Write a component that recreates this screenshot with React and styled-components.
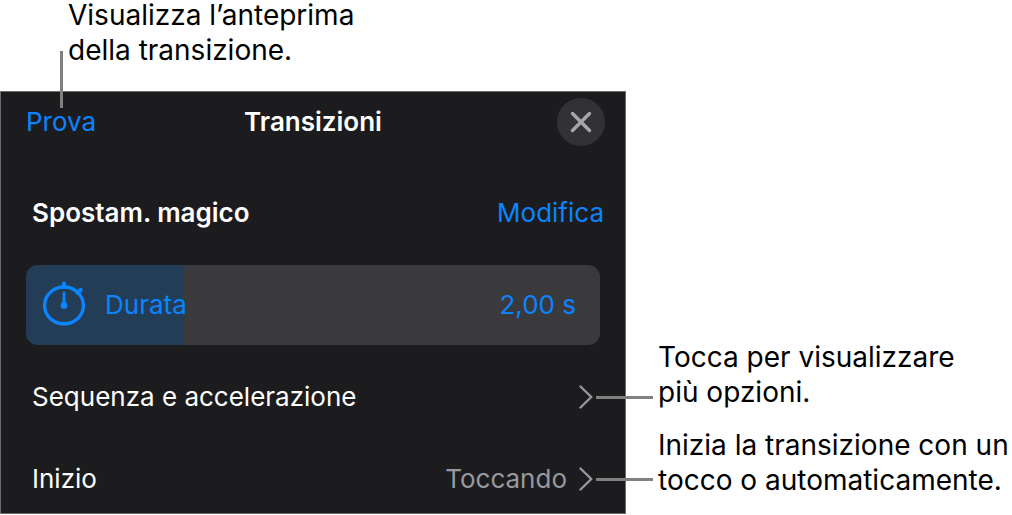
import React, { useState } from "react";
import styled, { createGlobalStyle } from "styled-components";

const MAX_DURATION = 7.3;

const App = () => {
  const [duration, setDuration] = useState(2);

  const fill = (duration / MAX_DURATION) * 100;
  const durationText = `${duration.toFixed(2).replace(".", ",")} s`;

  return (
    <>
      <GlobalStyle />
      <Figure>
        <TopNote>
          <Caption>
            Visualizza l’anteprima
            <br />
            della transizione.
          </Caption>
        </TopNote>
        <Panel>
          <Header>
            <HeaderButton type="button">Prova</HeaderButton>
            <Title>Transizioni</Title>
            <CloseButton type="button" aria-label="Chiudi">
              <CloseIcon />
            </CloseButton>
          </Header>
          <Effect>
            <EffectName>Spostam. magico</EffectName>
            <TextButton type="button">Modifica</TextButton>
          </Effect>
          <Slider>
            <Range
              id="duration"
              type="range"
              min="0"
              max={MAX_DURATION}
              step="0.01"
              value={duration}
              style={{ "--fill": `${fill}%` }}
              onChange={(e) => setDuration(Number(e.target.value))}
            />
            <SliderText>
              <StopwatchIcon />
              <label htmlFor="duration">Durata</label>
              <output htmlFor="duration">{durationText}</output>
            </SliderText>
          </Slider>
          <OptionRow label="Sequenza e accelerazione" />
          <OptionRow label="Inizio" value="Toccando" />
        </Panel>
        <SideNotes>
          <Caption>
            Tocca per visualizzare
            <br />
            più opzioni.
          </Caption>
          <Caption>
            Inizia la transizione con un
            <br />
            tocco o automaticamente.
          </Caption>
        </SideNotes>
      </Figure>
    </>
  );
};

const OptionRow = ({ label, value }) => (
  <Option type="button">
    <span>{label}</span>
    {value && <OptionValue>{value}</OptionValue>}
    <ChevronIcon />
  </Option>
);

const CloseIcon = () => (
  <svg width="22" height="22" viewBox="0 0 22 22" aria-hidden="true">
    <path
      d="M2.5 2.5 19.5 19.5M19.5 2.5 2.5 19.5"
      stroke="#a5a5ab"
      strokeWidth="3.4"
      strokeLinecap="round"
    />
  </svg>
);

const ChevronIcon = () => (
  <svg width="14" height="24" viewBox="0 0 14 24" aria-hidden="true">
    <path
      d="M1.5 1.5 12.3 12 1.5 22.5"
      fill="none"
      stroke="#98989c"
      strokeWidth="2.4"
      strokeLinecap="round"
      strokeLinejoin="round"
    />
  </svg>
);

const StopwatchIcon = () => (
  <svg width="44" height="48" viewBox="0 -1 44 48" aria-hidden="true">
    <g fill="none" stroke="#0a84ff" strokeLinecap="round">
      <ellipse cx="22" cy="23.4" rx="19.4" ry="18.4" strokeWidth="3.4" />
      <path d="M22 1.6V5" strokeWidth="4.2" />
      <path d="M35.6 10.6 38.6 8" strokeWidth="4.2" />
      <path d="M22 11V23" strokeWidth="2.8" />
    </g>
    <circle cx="22" cy="23.4" r="3.4" fill="#0a84ff" />
  </svg>
);

export default App;

const GlobalStyle = createGlobalStyle`
  body {
    margin: 0;
    background: #ffffff;
    font-family: Inter, "Liberation Sans", sans-serif;
  }
  button {
    padding: 0;
    border: 0;
    background: none;
    font: inherit;
    cursor: pointer;
  }
`;

const Figure = styled.main`
  display: grid;
  grid-template-columns: minmax(0, 626fr) minmax(0, 386fr);
`;

/* the negative margin trims the leading above and below the two lines */
const Caption = styled.p`
  margin: -2px 0;
  color: #000000;
  font-size: 28px;
  line-height: 35px;
  white-space: nowrap;
`;

const TopNote = styled.div`
  position: relative;
  display: flex;
  grid-column: 1 / -1;
  padding: 0 0 25px 68px;
  &::after {
    content: "";
    position: absolute;
    left: 60px;
    top: 51px;
    width: 3px;
    height: 57px;
    background: #808080;
  }
`;

const SideNotes = styled.div`
  display: flex;
  flex-direction: column;
  justify-content: flex-end;
  gap: 22px;
  padding: 0 0 18px 32px;
`;

const Panel = styled.section`
  display: flex;
  flex-direction: column;
  gap: 22px;
  padding: 0 0 4px;
  border: 1px solid #6c6c6e;
  background: #1c1c1e;
  color: #ffffff;
  font-size: 26px;
  line-height: 36px;
`;

const Header = styled.header`
  display: grid;
  grid-template-columns: 1fr auto 1fr;
  align-items: center;
  height: 60px;
  margin-bottom: 9px;
  padding: 0 20px;
`;

const Title = styled.h1`
  margin: 0;
  font-size: 26px;
  font-weight: 600;
`;

const TextButton = styled.button`
  color: #0a84ff;
`;

const HeaderButton = styled(TextButton)`
  justify-self: start;
  padding: 0 5px;
`;

const CloseButton = styled.button`
  display: flex;
  align-items: center;
  justify-content: center;
  justify-self: end;
  width: 48px;
  height: 48px;
  border-radius: 50%;
  background: #323236;
`;

const Effect = styled.div`
  display: flex;
  align-items: center;
  justify-content: space-between;
  height: 60px;
  padding: 0 21px 0 31px;
`;

const EffectName = styled.h2`
  margin: 0;
  font-size: 26px;
  font-weight: 600;
`;

const Slider = styled.div`
  display: grid;
  height: 80px;
  margin: 0 25px;
  border-radius: 12px;
  overflow: hidden;
  > * {
    grid-area: 1 / 1;
  }
`;

const Range = styled.input`
  appearance: none;
  width: 100%;
  height: 100%;
  margin: 0;
  background: linear-gradient(
    to right,
    #243d57 var(--fill),
    #3a3a3c var(--fill)
  );
  cursor: pointer;
  &::-webkit-slider-thumb {
    appearance: none;
    width: 1px;
    height: 80px;
  }
`;

const SliderText = styled.div`
  display: flex;
  align-items: center;
  padding: 0 24px 0 16px;
  color: #0a84ff;
  pointer-events: none;
  label {
    margin-left: 19px;
  }
  output {
    margin-left: auto;
  }
`;

const Option = styled.button`
  position: relative;
  display: flex;
  align-items: center;
  gap: 12px;
  height: 60px;
  margin: 0 32px 0 31px;
  color: #ffffff;
  text-align: left;
  svg {
    margin-left: auto;
  }
  &::after {
    content: "";
    position: absolute;
    left: calc(100% + 3px);
    width: 57px;
    height: 3px;
    background: #808080;
  }
`;

const OptionValue = styled.span`
  margin-left: auto;
  color: #98989f;
  & + svg {
    margin-left: 0;
  }
`;
